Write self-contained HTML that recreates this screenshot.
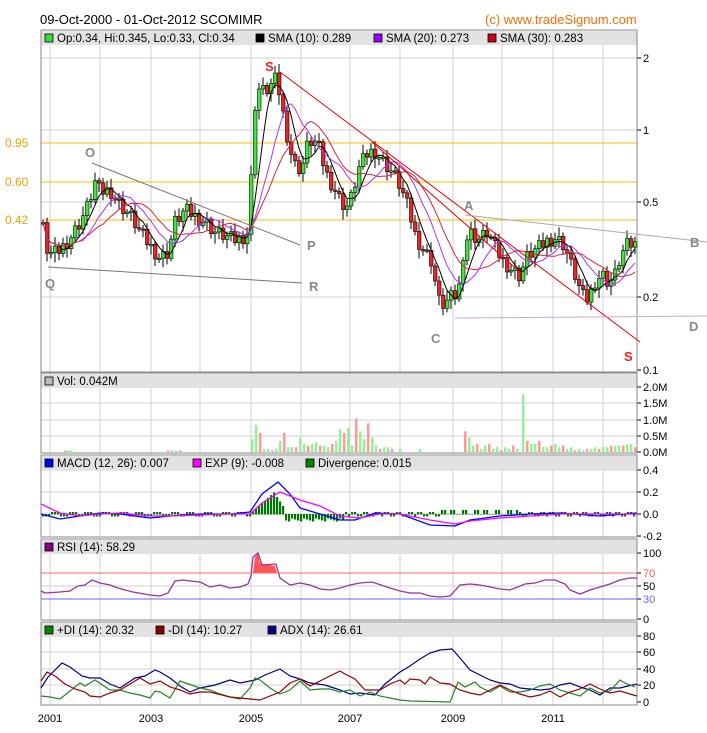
<!DOCTYPE html>
<html><head><meta charset="utf-8">
<style>
html,body{margin:0;padding:0;background:#fff;}
svg{display:block;font-family:"Liberation Sans",sans-serif;}
</style></head><body>
<svg id="s" width="707" height="733" xmlns="http://www.w3.org/2000/svg">
<rect width="707" height="733" fill="#fff"/>
<text x="40" y="24" font-size="13" fill="#000">09-Oct-2000 - 01-Oct-2012 SCOMIMR</text>
<text x="485" y="24" font-size="13" fill="#ff6a00">(c) www.tradeSignum.com</text>
<g id="grid"></g>
<g id="hdr"></g>
<g id="cnd"></g>
<g id="ov"></g>
</svg>
<script>
var NS="http://www.w3.org/2000/svg",S=document.getElementById('s');
function el(t,a,p,txt){var e=document.createElementNS(NS,t);for(var k in a)e.setAttribute(k,a[k]);if(txt!=null)e.textContent=txt;(p||S).appendChild(e);return e;}
var G=document.getElementById('grid'),H=document.getElementById('hdr'),C=document.getElementById('cnd'),O=document.getElementById('ov');
var L=41,R=637;
var panels=[[30,372],[373,453],[455,537],[539,620],[622,705]];
var vx=[50,100,151,200,251,301,350,400,453,502,553,603];
panels.forEach(function(p){
  vx.forEach(function(x){el('line',{x1:x,y1:p[0],x2:x,y2:p[1],stroke:'#d0d0d0'},G);});
});
function hl(y,p){el('line',{x1:L,y1:y,x2:R,y2:y,stroke:'#d0d0d0'},G);}
[58,130,202,297].forEach(function(y){hl(y);});
[387,403,420,436].forEach(hl);[470,492,514].forEach(hl);[553,586].forEach(hl);[636,652,669,685].forEach(hl);
function lab(y,t,c){el('line',{x1:R,y1:y,x2:R+4,y2:y,stroke:'#000'},G);el('text',{x:R+6,y:y+4,'font-size':11,fill:c||'#000'},G,t);}
lab(58,'2');lab(130,'1');lab(202,'0.5');lab(297,'0.2');lab(370,'0.1');
lab(387,'2.0M');lab(403,'1.5M');lab(420,'1.0M');lab(436,'0.5M');lab(452,'0.0M');
lab(470,'0.4');lab(492,'0.2');lab(514,'0.0');lab(536,'-0.2');
lab(553,'100');lab(573,'70','#f55');lab(586,'50');lab(599,'30','#66f');lab(619,'0');
lab(636,'80');lab(652,'60');lab(669,'40');lab(685,'20');lab(702,'0');
var hdrs=[
 [[['#33dd33','Op:0.34, Hi:0.345, Lo:0.33, Cl:0.34',44],['#000','SMA (10): 0.289',255],['#9900ff','SMA (20): 0.273',373],['#cc0022','SMA (30): 0.283',487]]],
 [[['#bbb','Vol: 0.042M',44]]],
 [[['#0000ff','MACD (12, 26): 0.007',44],['#ff00ff','EXP (9): -0.008',192],['#008800','Divergence: 0.015',305]]],
 [[['#880088','RSI (14): 58.29',44]]],
 [[['#008800','+DI (14): 20.32',44],['#880000','-DI (14): 10.27',155],['#000088','ADX (14): 26.61',267]]]
];
panels.forEach(function(p,i){
  el('rect',{x:L,y:p[0]+1,width:R-L,height:14,fill:'#e2e2e2'},H);
  hdrs[i][0].forEach(function(h){
    el('rect',{x:h[2]+1,y:p[0]+4,width:8,height:8,fill:h[0],stroke:'#000','stroke-width':0.8},H);
    el('text',{x:h[2]+13,y:p[0]+12,'font-size':11.5,fill:'#000'},H,h[1]);
  });
  el('rect',{x:L,y:p[0],width:R-L,height:p[1]-p[0],fill:'none',stroke:'#888'},H);
});
[['2001',50],['2003',151],['2005',251],['2007',350],['2009',453],['2011',553]].forEach(function(a){el('text',{x:a[1],y:722,'font-size':11,'text-anchor':'middle'},G,a[0]);});
[[143,'0.95'],[182,'0.60'],[220,'0.42']].forEach(function(a){el('line',{x1:L,y1:a[0],x2:R,y2:a[0],stroke:'#ffbb00'},G);el('text',{x:5,y:a[0]+4,'font-size':12,fill:'#e8a000'},G,a[1]);});
var K=[[41,215],[46,248],[52,255],[60,250],[70,238],[80,222],[88,205],[95,182],[100,192],[110,190],[120,205],[130,215],[140,232],[150,246],[160,258],[168,252],[175,222],[185,210],[195,216],[205,222],[215,232],[225,236],[235,240],[245,236],[250,228],[252,130],[257,88],[265,92],[275,80],[280,95],[284,120],[290,150],[296,168],[302,168],[306,148],[312,140],[318,145],[322,160],[328,178],[334,188],[340,200],[346,208],[352,196],[358,170],[366,155],[374,150],[382,160],[392,172],[400,186],[408,208],[416,238],[424,250],[432,262],[438,300],[444,305],[450,298],[458,295],[464,245],[470,232],[478,240],[488,232],[496,250],[504,262],[512,270],[520,276],[526,258],[532,252],[540,247],[548,240],[556,238],[564,245],[570,262],[576,278],[582,296],[588,300],[594,282],[602,274],[608,282],[614,278],[620,258],[626,246],[632,244],[637,245]];
function py(x){for(var i=1;i<K.length;i++){if(x<=K[i][0]){var a=K[i-1],b=K[i];return a[1]+(b[1]-a[1])*(x-a[0])/(b[0]-a[0]);}}return K[K.length-1][1];}
var xs=[],ys=[];for(var x=43;x<=635;x+=4){xs.push(x);ys.push(py(x)+((x*7919)%11-5)*1.4);}
for(var i=0;i<xs.length;i++){
  var o=i?ys[i-1]:ys[0],c=ys[i],hi=Math.min(o,c)-3-(i*37%7),lo=Math.max(o,c)+3+(i*13%8);
  el('line',{x1:xs[i],y1:hi,x2:xs[i],y2:lo,stroke:'#000'},C);
  var t=Math.min(o,c),h=Math.max(Math.abs(o-c),1.5);
  el('rect',{x:xs[i]-1.5,y:t,width:3.5,height:h,fill:c<o?'#33ee33':'#ee2222',stroke:'#000','stroke-width':0.6},C);
}
function sma(n,col){var pts=[];for(var i=0;i<ys.length;i++){var s=0,k=0;for(var j=Math.max(0,i-n+1);j<=i;j++){s+=ys[j];k++;}pts.push(xs[i]+','+(s/k).toFixed(1));}el('polyline',{points:pts.join(' '),fill:'none',stroke:col,'stroke-width':1},C);}
sma(5,'#000');sma(10,'#aa33ff');sma(15,'#dd2244');
function ln(a,b,c,d,col){el('line',{x1:a,y1:b,x2:c,y2:d,stroke:col},O);}
ln(280,72,640,342,'#e00');ln(372,142,520,272,'#e00');ln(92,163,300,245,'#777');ln(48,267,302,283,'#777');ln(465,215,707,242,'#aaa');ln(455,318,707,316,'#c8a8d8');
function tx(x,y,t,c){el('text',{x:x,y:y,'font-size':13,'font-weight':'bold',fill:c||'#888'},O,t);}
tx(265,71,'S','#e22');tx(85,157,'O');tx(307,250,'P');tx(309,291,'R');tx(45,288,'Q');tx(431,343,'C');tx(464,210,'A');tx(690,247,'B');tx(689,331,'D');tx(624,361,'S','#e22');
var V=[[65,1],[68,1],[71,1],[168,1],[172,1],[176,1],[180,1],[252,8],[256,17],[260,12],[264,2],[268,2],[272,1],[276,2],[280,7],[284,12],[288,3],[292,3],[296,3],[300,9],[304,5],[308,4],[312,5],[316,6],[320,4],[324,4],[328,3],[332,5],[336,7],[340,14],[344,12],[348,15],[352,4],[356,21],[360,13],[364,8],[368,18],[372,9],[376,4],[380,2],[384,3],[388,3],[392,2],[400,2],[420,2],[465,13],[469,9],[473,4],[477,5],[481,2],[485,4],[489,5],[493,2],[497,3],[501,1],[505,3],[509,2],[513,4],[517,2],[523,36],[527,7],[531,5],[535,5],[539,7],[543,3],[547,3],[551,4],[555,5],[559,3],[563,4],[567,2],[571,3],[575,1],[579,2],[583,1],[587,2],[591,2],[595,3],[599,2],[603,3],[607,3],[611,4],[615,4],[619,4],[623,4],[627,5],[631,5],[635,3]];
V.forEach(function(v,i){var h=v[1]*1.6;el('rect',{x:v[0]-1,y:452-h,width:2.5,height:h,fill:(i%3==0)?'#ff9999':'#99ee99'},C);});
for(var x=43;x<=635;x+=3){var d=0;
 if(x>250&&x<275)d=-(x-250)*0.9;else if(x>=275&&x<285)d=-20+(x-275)*1.5;else if(x>=285&&x<345)d=4+((x*3)%4);else if(x<250)d=((x%17)<9?-2:2);else d=((x%11)<6?-2:2)+(x>440&&x<520?-2:0);
 el('rect',{x:x-1,y:Math.min(514,514+d),width:2.2,height:Math.abs(d)+0.5,fill:'#007700'},C);}
el('polyline',{points:'41,514 60,519 80,516 100,513 120,514 150,518 170,516 200,514 230,514 250,512 262,494 278,482 290,494 300,508 320,514 340,520 355,520 375,513 400,514 430,525 455,526 470,520 500,516 530,514 560,513 600,516 637,513',fill:'none',stroke:'#0000ff','stroke-width':1.3},O);
el('polyline',{points:'41,504 60,513 80,516 100,514 120,513 150,516 170,516 200,515 230,514 250,514 262,503 280,492 300,500 320,506 340,516 360,518 380,514 400,514 430,520 455,524 470,521 500,518 530,516 560,514 600,514 637,514',fill:'none',stroke:'#ff00ff','stroke-width':1.3},O);
el('polygon',{points:'253,573 255,557 258,553 260,563 265,565 270,565 275,566 277,573',fill:'#ff5555'},O);
el('polyline',{points:'41,591 45,593 60,592 70,591 78,586 85,585 92,580 100,583 110,585 118,588 125,590 133,592 150,595 160,596 168,593 175,581 183,580 190,581 200,582 210,587 220,585 230,588 240,587 248,584 251,576 253,557 258,553 262,565 276,564 280,578 290,585 300,583 310,585 320,589 330,590 340,588 350,585 360,583 372,582 390,588 400,591 410,593 420,593 430,596 440,597 450,596 460,585 470,584 480,585 490,587 500,589 510,590 525,584 535,583 545,580 555,580 565,584 570,590 580,594 590,590 600,587 610,584 620,580 630,578 637,578',fill:'none',stroke:'#993399','stroke-width':1.3},O);
el('line',{x1:L,y1:573,x2:R,y2:573,stroke:'#ff6666'},O);el('line',{x1:L,y1:599,x2:R,y2:599,stroke:'#6666ff'},O);
el('polyline',{points:'41,688 48,677 62,663 70,667 82,676 90,678 100,678 110,684 120,688 135,678 145,676 155,670 160,672 170,678 180,686 190,692 200,688 215,685 230,680 240,683 255,680 265,675 280,669 290,676 300,679 310,683 325,685 340,690 350,694 360,693 375,695 385,684 395,676 400,672 410,666 420,659 430,653 440,650 452,649 460,658 470,670 480,675 490,680 500,683 510,684 520,688 530,689 540,690 550,689 560,685 570,683 580,687 590,690 600,695 610,688 620,688 628,686 637,684',fill:'none',stroke:'#000088','stroke-width':1.2},O);
el('polyline',{points:'41,696 50,697 60,699 70,691 80,683 85,686 95,680 110,690 120,690 130,693 140,695 150,698 155,691 160,692 170,698 180,681 200,688 210,690 220,694 230,697 240,699 250,688 255,678 260,680 270,688 280,694 290,690 300,681 310,690 320,689 330,689 340,692 350,690 360,696 370,692 380,696 390,698 400,700 410,701 450,702 458,682 465,687 475,682 480,687 490,692 500,686 510,692 520,692 530,690 540,686 550,684 560,690 570,693 580,696 590,688 600,693 610,691 620,680 625,683 635,687',fill:'none',stroke:'#228822','stroke-width':1.2},O);
el('polyline',{points:'41,681 47,672 55,676 65,684 75,689 85,692 90,696 100,697 110,693 120,690 130,684 140,678 150,684 160,681 170,687 180,690 190,694 200,692 210,692 230,697 260,700 280,692 290,683 300,679 310,686 320,681 330,676 340,671 345,674 355,679 365,690 380,690 390,684 400,680 405,684 410,679 420,680 425,684 430,677 440,683 450,684 460,690 470,693 480,695 490,690 500,685 510,690 520,694 530,697 540,695 550,691 560,697 570,692 580,689 590,684 600,689 610,693 620,691 630,694 637,696',fill:'none',stroke:'#990000','stroke-width':1.2},O);
</script>
</body></html>
